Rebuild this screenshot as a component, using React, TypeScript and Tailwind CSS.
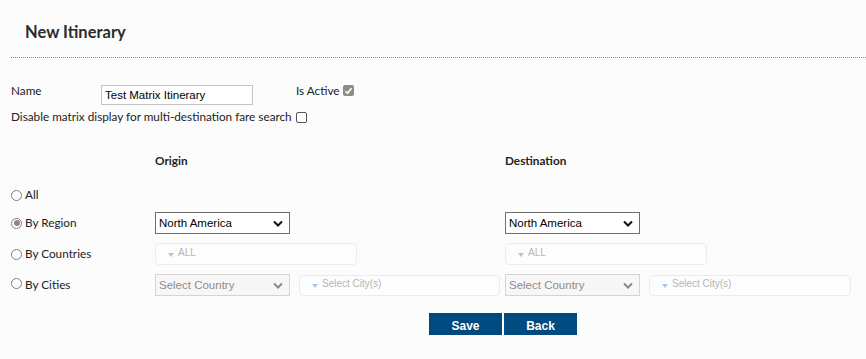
import React from "react";

const Radio = ({ checked = false }: { checked?: boolean }) => (
  <span className="flex h-[11px] w-[11px] shrink-0 items-center justify-center rounded-full border border-[#808080] bg-white">
    {checked && <span className="h-[6px] w-[6px] rounded-full bg-[#8a8a8a]" />}
  </span>
);

const Chevron = ({ color }: { color: string }) => (
  <svg width="10" height="7" viewBox="0 0 10 7" className="shrink-0">
    <path d="M1 1.5l4 4 4-4" stroke={color} strokeWidth="2" fill="none" />
  </svg>
);

const Select = ({ text, disabled = false }: { text: string; disabled?: boolean }) => (
  <div
    className={
      disabled
        ? "flex h-[22px] w-[135px] items-center justify-between border border-[#d4d4d4] bg-[#f7f7f7] pl-[3px] pr-[6px] font-[family-name:Liberation_Sans,Arial,sans-serif] text-[11.5px] text-[#8c8c8c]"
        : "flex h-[22px] w-[135px] items-center justify-between border border-[#6e6e6e] bg-white pl-[3px] pr-[6px] font-[family-name:Liberation_Sans,Arial,sans-serif] text-[11.5px] text-black"
    }
  >
    <span>{text}</span>
    <Chevron color={disabled ? "#8a8a8a" : "#111"} />
  </div>
);

const Multi = ({ text, w }: { text: string; w: string }) => (
  <div
    className={
      "flex items-center rounded-[4px] border border-[#ececec] bg-[#fdfdfd] pl-[12px] font-[family-name:Liberation_Sans,Arial,sans-serif] text-[10px] text-[#b5b5b5] " +
      w
    }
  >
    <svg width="6" height="4" viewBox="0 0 6 4" className="mr-[4px] mt-[1px]">
      <path d="M0 0h6L3 4z" fill="#a8c7e6" />
    </svg>
    <span className="-mt-[2px]">{text}</span>
  </div>
);

export default function App() {
  return (
    <div className="h-[359px] w-full overflow-hidden bg-[#fcfcfc] font-['Lato',sans-serif] text-[#222]">
      <div className="h-[57px] pl-[25px] pt-[22px]">
        <h1 className="text-[16.5px] font-bold leading-[20px] text-[#2b2b2b]">New Itinerary</h1>
      </div>
      <div className="ml-[11px] border-t border-dotted border-[#8a8a8a]" />

      <div className="pl-[11px] pt-[27px] text-[11.75px] leading-[12px]">
        <div className="flex h-[20px] items-start">
          <span className="w-[90px]">Name</span>
          <div className="flex h-[20px] w-[152px] items-center border border-[#c4c4c4] bg-white pl-[3px] font-[family-name:Liberation_Sans,Arial,sans-serif] text-[11.5px] text-black">
            Test Matrix Itinerary
          </div>
          <span className="ml-[43px]">Is Active</span>
          <span className="ml-[3px] flex h-[11px] w-[11px] items-center justify-center rounded-[2px] bg-[#8c8c8c]">
            <svg width="9" height="8" viewBox="0 0 9 8">
              <path d="M1.5 4.2l2 2 4-5" stroke="#fff" strokeWidth="1.6" fill="none" />
            </svg>
          </span>
        </div>

        <div className="mt-[6px] flex h-[12px] items-start">
          <span>Disable matrix display for multi-destination fare search</span>
          <span className="ml-[4px] mt-[1px] h-[11px] w-[11px] rounded-[2px] border border-[#555] bg-white" />
        </div>

        <div className="mt-[32px] grid grid-cols-[144px_350px_1fr] font-bold">
          <span />
          <span>Origin</span>
          <span>Destination</span>
        </div>

        <div className="mt-[17px] flex h-[22px] items-center gap-[3px]">
          <Radio />
          <span>All</span>
        </div>

        <div className="mt-[6px] grid h-[22px] grid-cols-[144px_350px_1fr] items-center">
          <div className="flex items-center gap-[3px]">
            <Radio checked />
            <span>By Region</span>
          </div>
          <Select text="North America" />
          <Select text="North America" />
        </div>

        <div className="mt-[9px] grid h-[22px] grid-cols-[144px_350px_1fr] items-center">
          <div className="flex items-center gap-[3px]">
            <Radio />
            <span>By Countries</span>
          </div>
          <Multi text="ALL" w="h-[22px] w-[202px]" />
          <Multi text="ALL" w="h-[22px] w-[202px]" />
        </div>

        <div className="mt-[9px] grid h-[22px] grid-cols-[144px_350px_1fr] items-center">
          <div className="flex items-center gap-[3px]">
            <span className="-mt-[4px]">
              <Radio />
            </span>
            <span>By Cities</span>
          </div>
          <div className="flex items-center gap-[9px]">
            <Select text="Select Country" disabled />
            <Multi text="Select City(s)" w="h-[21px] w-[201px]" />
          </div>
          <div className="flex items-center gap-[9px]">
            <Select text="Select Country" disabled />
            <Multi text="Select City(s)" w="h-[21px] w-[202px]" />
          </div>
        </div>

        <div className="mt-[17px] flex gap-[2px] pl-[418px] font-[family-name:Liberation_Sans,Arial,sans-serif] text-[12px] font-bold text-white">
          <button className="h-[22px] w-[73px] bg-[#004a80] pt-[3px]">Save</button>
          <button className="h-[22px] w-[73px] bg-[#004a80] pt-[3px]">Back</button>
        </div>
      </div>
    </div>
  );
}
